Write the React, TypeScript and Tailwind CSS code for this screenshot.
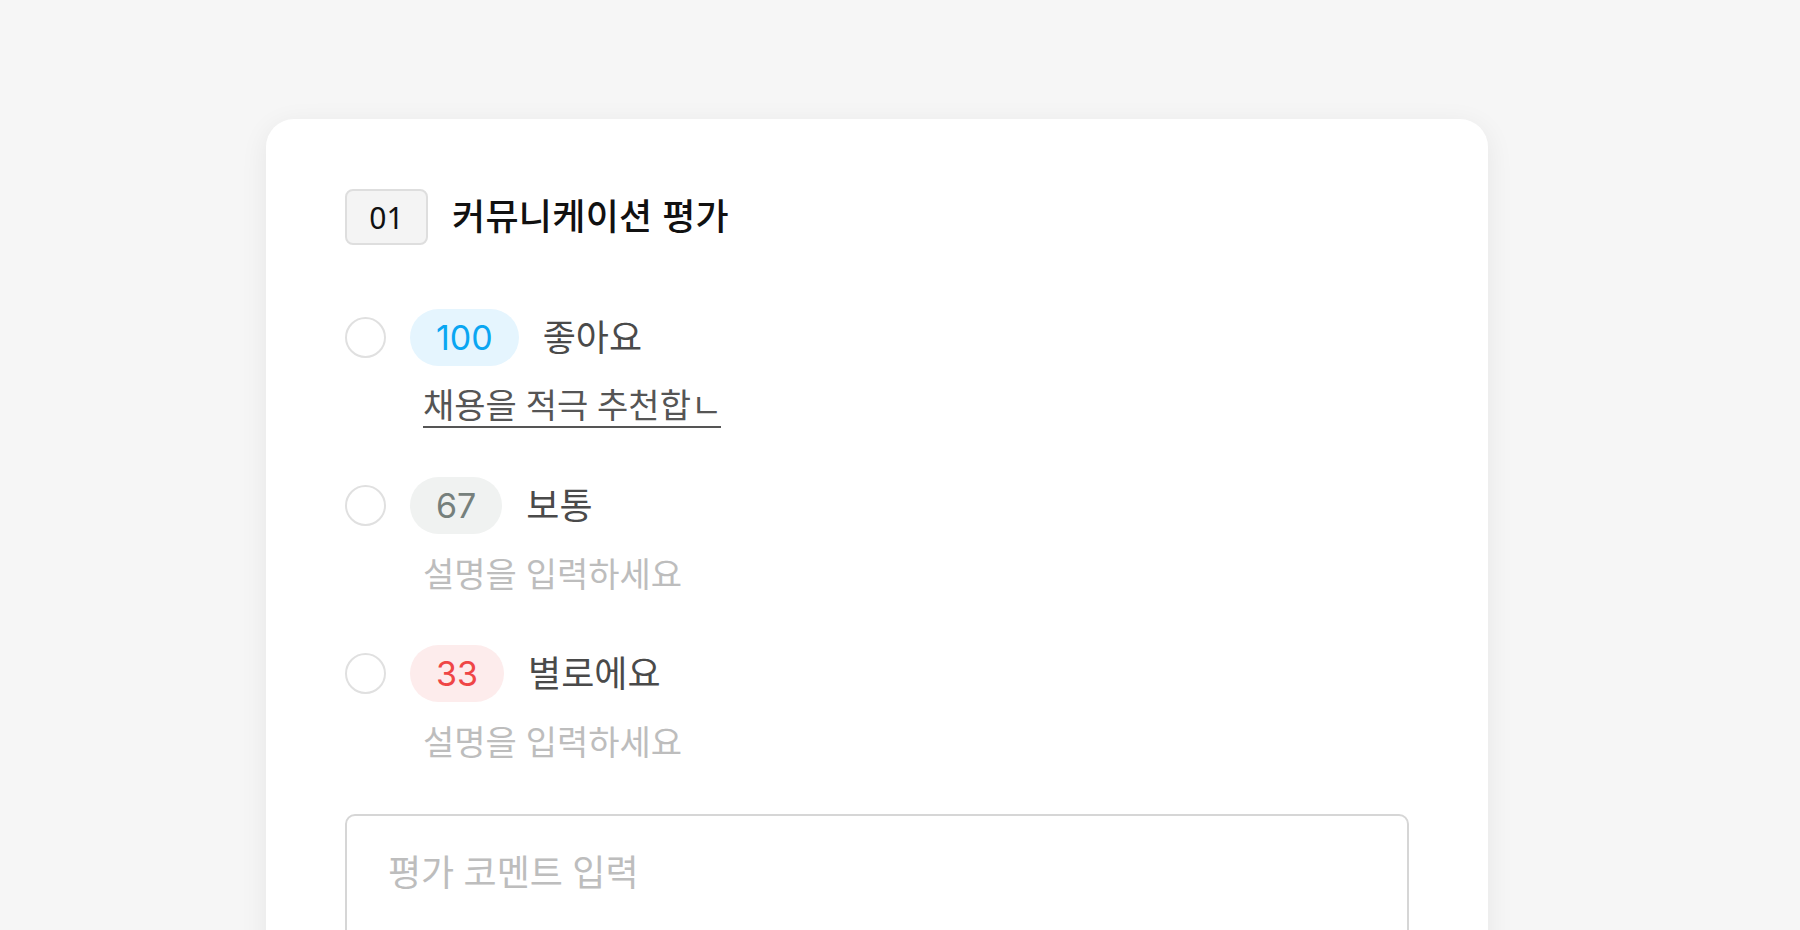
import React from "react";

interface Option {
  score: number;
  label: string;
  desc: string;
  badge: string;
}

const options: Option[] = [
  { score: 100, label: "좋아요", desc: "채용을 적극 추천합ㄴ", badge: "bg-[#e5f5fe] text-[#0aa6f2]" },
  { score: 67, label: "보통", desc: "", badge: "bg-[#f0f2f1] text-[#76807c]" },
  { score: 33, label: "별로에요", desc: "", badge: "bg-[#fdecec] text-[#ef4646]" },
];

const font = "font-['Noto_Sans','Noto_Sans_CJK_KR',sans-serif]";

export default function App() {
  return (
    <div className={`min-h-screen bg-[#f6f6f6] pt-[119px] pl-[266px] ${font}`}>
      <div className="w-[1222px] bg-white rounded-[28px] shadow-[0_6px_28px_rgba(0,0,0,0.07)] px-[79px] pt-[70px] pb-[80px]">
        {/* Header */}
        <div className="flex items-center gap-[24px]">
          <div className="w-[83px] h-[56px] flex items-center justify-center rounded-[8px] border-2 border-[#dedede] bg-[#f4f4f4] text-[30px] text-[#111]">
            01
          </div>
          <h2 className="text-[36px] font-medium text-[#111] tracking-[0.3px]">
            커뮤니케이션 평가
          </h2>
        </div>

        {/* Options */}
        <div className="mt-[64px] flex flex-col gap-[49px]">
          {options.map((o, i) => (
            <div key={o.score} className="flex flex-col">
              <div className="flex items-center gap-[24px]">
                <span className="w-[41px] h-[41px] rounded-full border-[2.5px] border-[#e0e0e0] shrink-0" />
                <span className={`h-[57px] px-[26px] rounded-full flex items-center text-[34px] font-['Inter',sans-serif] ${o.badge}`}>
                  {o.score}
                </span>
                <span className="text-[36px] text-[#4a4a4a]">
                  {o.label}
                </span>
              </div>
              <div className="mt-[18px] pl-[78px]">
                {i === 0 ? (
                  <input
                    defaultValue={o.desc}
                    className="w-[298px] h-[44px] text-[34px] text-[#555] border-b-2 border-[#555] outline-none"
                  />
                ) : (
                  <input
                    placeholder="설명을 입력하세요"
                    className="w-[400px] h-[44px] text-[34px] text-[#555] placeholder:text-[#bdbdbd] outline-none"
                  />
                )}
              </div>
            </div>
          ))}
        </div>

        {/* Comment */}
        <textarea
          placeholder="평가 코멘트 입력"
          className="mt-[50px] w-full h-[220px] resize-none rounded-[10px] border-2 border-[#d6d6d6] px-[41px] pt-[30px] text-[36px] text-[#333] placeholder:text-[#bdbdbd] outline-none"
        />
      </div>
    </div>
  );
}
